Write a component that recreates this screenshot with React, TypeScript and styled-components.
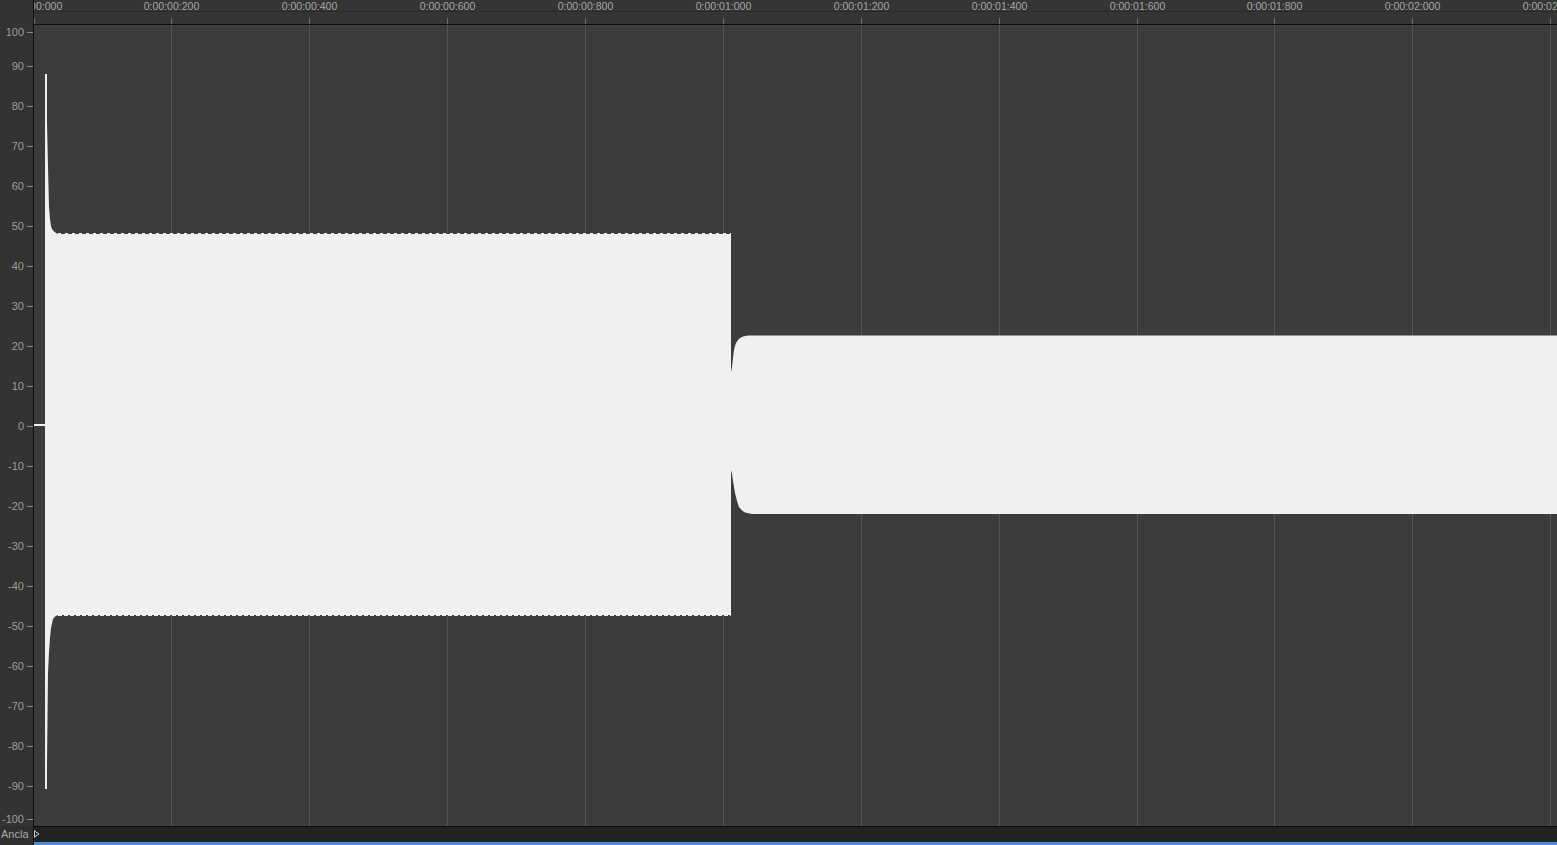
import React from "react";
import styled, { createGlobalStyle } from "styled-components";

const GlobalStyle = createGlobalStyle`
  html, body { margin: 0; padding: 0; background: #333333; overflow: hidden; }
  #root { width: 1557px; height: 845px; }
`;

const Frame = styled.div`
  display: grid;
  grid-template-columns: 34px 1fr;
  grid-template-rows: 25px 801px 19px;
  width: 1557px;
  height: 845px;
  font-family: "Liberation Sans", Arial, Helvetica, sans-serif;
  background: #333333;
`;

const GutterCell = styled.div<{ $dark?: boolean }>`
  position: relative;
  box-sizing: border-box;
  background: ${(p) => (p.$dark ? "#2f2f2f" : "#333333")};
  border-right: 1px solid #0d0d0d;
`;

const Ruler = styled.div`
  position: relative;
  display: flex;
  flex-direction: column;
  box-sizing: border-box;
  background: #353535;
  border-bottom: 1px solid #0f0f0f;
  overflow: hidden;
`;

const LabelStrip = styled.div`
  position: relative;
  height: 11px;
  border-bottom: 1px solid #2a2a2a;
`;

const TickStrip = styled.div`
  position: relative;
  flex: 1;
`;

const RulerLabel = styled.span`
  position: absolute;
  top: 1px;
  transform: translateX(-50%);
  font-size: 10.5px;
  line-height: 11px;
  color: #a6a6a6;
  white-space: nowrap;
`;

const RulerTick = styled.span`
  position: absolute;
  bottom: 0;
  width: 1px;
  height: 6px;
  background: #6e6e6e;
`;

const AxisLabel = styled.span`
  position: absolute;
  right: 9px;
  font-size: 11px;
  line-height: 12px;
  color: #9c9c9c;
  white-space: nowrap;
`;

const AxisTick = styled.span`
  position: absolute;
  left: 27px;
  width: 6px;
  height: 1px;
  background: #8a8a8a;
`;

const Plot = styled.div`
  position: relative;
  background: #3c3c3c;
  overflow: hidden;
`;

const PlotSvg = styled.svg`
  display: block;
  width: 100%;
  height: 100%;
`;

const AnchorLabel = styled.span`
  position: absolute;
  left: 1px;
  top: 2px;
  font-size: 11px;
  line-height: 13px;
  color: #a8a8a8;
`;

const BottomBar = styled.div`
  display: flex;
  align-items: flex-start;
  box-sizing: border-box;
  background: #222222;
  border-top: 1px solid #0b0b0b;
  border-bottom: 3px solid #4d8cd3;
  padding-top: 3px;
`;

const Marker = styled.svg`
  display: block;
  width: 6px;
  height: 8px;
`;

const X0 = 33.5;
const STEP = 137.88;
const gridXs = Array.from({ length: 12 }, (_, k) => Math.round(X0 + STEP * k));

const fmt = (k: number) => {
  const ms = k * 200;
  const s = Math.floor(ms / 1000);
  const rest = ms % 1000;
  return `0:00:${String(s).padStart(2, "0")}:${String(rest).padStart(3, "0")}`;
};

const yFor = (v: number) => Math.min(819, Math.max(32, Math.round(425.5 - 4 * v)));
const yValues = Array.from({ length: 21 }, (_, i) => 100 - i * 10);

const wavePath =
  "M34,424 L45,424 L45,74 L47,74 L47,122 L48,167 L49,207 L50,219 L51,226 L52,229 L54,231.5 L56,233 L58,234 " +
  "L731,234 L731,372 L732,367 L733,358 L734,350 L735,346 L736,343 L738,340 L740,338 L743,336.5 L748,335.5 " +
  "L1557,335.5 L1557,514 L752,514 L745,512.5 L742,510.5 L739,507 L737,501 L735,493 L734,487 L733,481 L732,474 " +
  "L731,470 L731,615 L58,615 L55,616.5 L53,619 L51,628 L50,638 L49,652 L48,673 L47,766 L47,789 L45,789 L45,426 L34,426 Z";

export default function App() {
  return (
    <>
      <GlobalStyle />
      <Frame>
        <GutterCell />
        <Ruler>
          <LabelStrip>
            {gridXs.map((x, k) => (
              <RulerLabel key={k} style={{ left: x - 34 + 0.5 }}>
                {fmt(k)}
              </RulerLabel>
            ))}
          </LabelStrip>
          <TickStrip>
            {gridXs.map((x, k) => (
              <RulerTick key={k} style={{ left: x - 34 }} />
            ))}
          </TickStrip>
        </Ruler>

        <GutterCell>
          {yValues.map((v) => {
            const y = yFor(v) - 25;
            return (
              <React.Fragment key={v}>
                <AxisLabel style={{ top: y - 6 }}>{v}</AxisLabel>
                <AxisTick style={{ top: y }} />
              </React.Fragment>
            );
          })}
        </GutterCell>
        <Plot>
          <PlotSvg viewBox="0 0 1523 801" preserveAspectRatio="none">
            <g transform="translate(-34,-25)">
              {gridXs.slice(1).map((x) => (
                <line key={x} x1={x + 0.5} x2={x + 0.5} y1={25} y2={826} stroke="#545454" strokeWidth={1} />
              ))}
              <path d={wavePath} fill="#f0f0f0" />
              <line x1={58} x2={731} y1={233.5} y2={233.5} stroke="#f0f0f0" strokeWidth={1} strokeDasharray="3 4" />
              <line x1={58} x2={731} y1={615.5} y2={615.5} stroke="#f0f0f0" strokeWidth={1} strokeDasharray="4 2" />
            </g>
          </PlotSvg>
        </Plot>

        <GutterCell $dark>
          <AnchorLabel>Ancla</AnchorLabel>
        </GutterCell>
        <BottomBar>
          <Marker viewBox="0 0 6 8">
            <path d="M0.5,0.5 L0.5,7.5 M0.5,1 L5,4 L0.5,7" fill="none" stroke="#cfcfcf" strokeWidth={1} />
          </Marker>
        </BottomBar>
      </Frame>
    </>
  );
}
